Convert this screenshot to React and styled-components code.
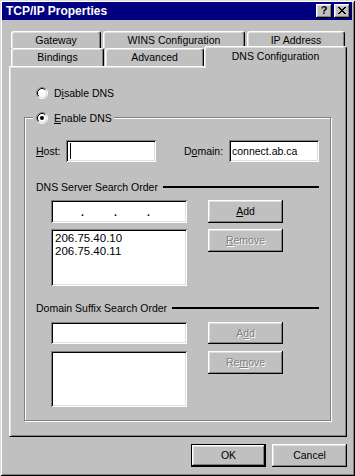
import React from "react";
import styled, { createGlobalStyle } from "styled-components";

const GlobalStyle = createGlobalStyle`
  html, body { margin: 0; padding: 0; background: #c0c0c0; }
  body { font-family: "Liberation Sans", Arial, sans-serif; font-size: 10.5px; color: #000; }
  * { box-sizing: border-box; }
`;

const Window = styled.div`
  width: 355px;
  height: 476px;
  background: #c0c0c0;
  box-shadow: inset 1px 1px #dfdfdf, inset -1px -1px #000, inset 2px 2px #fff, inset -2px -2px #808080;
  padding: 2px 3px 3px 2px;
  display: flex;
  flex-direction: column;
`;

const TitleBar = styled.div`
  height: 18px;
  background: #000080;
  color: #fff;
  display: flex;
  align-items: center;
  padding: 0 2px 0 4px;
`;

const TitleText = styled.div`
  flex: 1;
  font-weight: bold;
  font-size: 12px;
  white-space: nowrap;
`;

const CaptionButton = styled.div`
  width: 16px;
  height: 14px;
  margin-left: ${(p) => p.$ml || 0}px;
  background: #c0c0c0;
  box-shadow: inset -1px -1px #000, inset 1px 1px #fff, inset -2px -2px #808080, inset 2px 2px #dfdfdf;
  display: flex;
  align-items: center;
  justify-content: center;
  color: #000;
  font-weight: bold;
  font-size: 11px;
  line-height: 1;
  padding-bottom: 1px;
`;

const TabStrip = styled.div`
  margin-top: 11px;
  margin-left: 9px;
  display: flex;
  flex-direction: column;
`;

const TabRow = styled.div`
  display: flex;
  align-items: flex-start;
  height: ${(p) => p.$h}px;
`;

const Tab = styled.div`
  position: relative;
  z-index: ${(p) => (p.$active ? 2 : 0)};
  width: ${(p) => p.$w}px;
  height: ${(p) => (p.$active ? 22 : p.$h)}px;
  margin-left: ${(p) => p.$ml || 0}px;
  margin-top: ${(p) => (p.$active ? -2 : 0)}px;
  background: #c0c0c0;
  border-left: 1px solid #fff;
  border-top: 1px solid #fff;
  border-right: 1px solid #000;
  border-radius: 3px 3px 0 0;
  box-shadow: inset -1px 0 #808080, inset 1px 1px #dfdfdf;
  display: flex;
  align-items: center;
  justify-content: center;
  padding-bottom: ${(p) => (p.$active ? 4 : 1)}px;
  white-space: nowrap;
`;

const Panel = styled.div`
  width: 338px;
  height: 371px;
  margin-left: 7px;
  border-top: 1px solid #fff;
  border-left: 1px solid #fff;
  border-right: 1px solid #000;
  border-bottom: 1px solid #000;
  box-shadow: inset 1px 1px #dfdfdf, inset -1px -1px #808080;
  padding: 19px 15px 0 14px;
  display: flex;
  flex-direction: column;
`;

const RadioLabel = styled.div`
  display: flex;
  align-items: center;
  gap: 6px;
  height: 13px;
  margin-left: ${(p) => p.$ml || 0}px;
  white-space: nowrap;
`;

const GroupBox = styled.div`
  position: relative;
  margin-top: 18px;
  border: 1px solid #808080;
  box-shadow: inset 1px 1px #fff, 1px 1px #fff;
  padding: 22px 11px 13px 11px;
  display: flex;
  flex-direction: column;
`;

const Legend = styled.div`
  position: absolute;
  top: -7px;
  left: 8px;
  padding: 0 2px 0 3px;
  background: #c0c0c0;
`;

const FieldRow = styled.div`
  display: flex;
  align-items: center;
  height: 22px;
`;

const FieldLabel = styled.div`
  width: ${(p) => p.$w}px;
  margin-left: ${(p) => p.$ml || 0}px;
  white-space: nowrap;
`;

const TextBox = styled.div`
  width: ${(p) => p.$w}px;
  height: ${(p) => p.$h}px;
  background: #fff;
  box-shadow: inset 1px 1px #808080, inset -1px -1px #fff, inset 2px 2px #000, inset -2px -2px #dfdfdf;
  padding: 0 3px;
  display: flex;
  align-items: center;
  white-space: nowrap;
`;

const Caret = styled.span`
  display: block;
  width: 1px;
  height: 16px;
  background: #000;
  margin-left: 1px;
`;

const IpBox = styled(TextBox)`
  padding: 0;
`;

const IpSegment = styled.div`
  width: 33px;
  text-align: right;
  font-weight: bold;
  padding-right: 0;
  line-height: 1;
  padding-top: 2px;
`;

const SectionHeader = styled.div`
  display: flex;
  align-items: center;
  gap: 5px;
  height: 13px;
  margin-top: ${(p) => p.$mt}px;
  white-space: nowrap;
`;

const Rule = styled.div`
  flex: 1;
  height: 2px;
  background: #000;
`;

const SectionRow = styled.div`
  display: flex;
  align-items: flex-start;
  gap: 21px;
  margin-left: 15px;
  margin-top: ${(p) => p.$mt}px;
`;

const ListBox = styled.div`
  width: 136px;
  height: ${(p) => p.$h}px;
  background: #fff;
  box-shadow: inset 1px 1px #808080, inset -1px -1px #fff, inset 2px 2px #000, inset -2px -2px #dfdfdf;
  padding: 3px 4px;
  display: flex;
  flex-direction: column;
`;

const ListItem = styled.div`
  font-size: 11.5px;
  line-height: 12.5px;
  white-space: nowrap;
`;

const Button = styled.div`
  width: 75px;
  height: ${(p) => p.$h || 23}px;
  background: #c0c0c0;
  border: ${(p) => (p.$default ? "1px solid #000" : "none")};
  box-shadow: inset -1px -1px #000, inset 1px 1px #fff, inset -2px -2px #808080, inset 2px 2px #dfdfdf;
  display: flex;
  align-items: center;
  justify-content: center;
  color: ${(p) => (p.$disabled ? "#808080" : "#000")};
  text-shadow: ${(p) => (p.$disabled ? "1px 1px 0 #fff" : "none")};
  padding-bottom: 1px;
  white-space: nowrap;
`;

const DialogButtons = styled.div`
  display: flex;
  justify-content: flex-end;
  gap: 6px;
  margin-top: 7px;
  padding-right: 5px;
`;

const Key = styled.span`
  text-decoration: underline;
  text-underline-offset: 1px;
`;

function RadioIcon({ checked }) {
  return (
    <svg width="12" height="12" viewBox="0 0 12 12" style={{ flex: "none" }}>
      <circle cx="6" cy="6" r="4.5" fill="#fff" />
      <path d="M2.11 9.89 A5.5 5.5 0 0 1 9.89 2.11" fill="none" stroke="#808080" strokeWidth="1" />
      <path d="M9.89 2.11 A5.5 5.5 0 0 1 2.11 9.89" fill="none" stroke="#fff" strokeWidth="1" />
      <path d="M2.82 9.18 A4.5 4.5 0 0 1 9.18 2.82" fill="none" stroke="#000" strokeWidth="1" />
      <path d="M9.18 2.82 A4.5 4.5 0 0 1 2.82 9.18" fill="none" stroke="#dfdfdf" strokeWidth="1" />
      {checked && <circle cx="6" cy="6" r="2" fill="#000" />}
    </svg>
  );
}

function CloseGlyph() {
  return (
    <svg width="8" height="7" viewBox="0 0 8 7" shapeRendering="crispEdges">
      <path d="M0 0h2v1h-2zM6 0h2v1h-2zM1 1h2v1h-2zM5 1h2v1h-2zM2 2h4v1h-4zM3 3h2v1h-2zM2 4h4v1h-4zM1 5h2v1h-2zM5 5h2v1h-2zM0 6h2v1h-2zM6 6h2v1h-2z" fill="#000" />
    </svg>
  );
}

export default function App() {
  return (
    <>
      <GlobalStyle />
      <Window>
        <TitleBar>
          <TitleText>TCP/IP Properties</TitleText>
          <CaptionButton>?</CaptionButton>
          <CaptionButton $ml={2}>
            <CloseGlyph />
          </CaptionButton>
        </TitleBar>

        <TabStrip>
          <TabRow $h={17}>
            <Tab $w={90} $h={17}>Gateway</Tab>
            <Tab $w={142} $h={17} $ml={2}>WINS Configuration</Tab>
            <Tab $w={98} $h={17} $ml={2}>IP Address</Tab>
          </TabRow>
          <TabRow $h={18}>
            <Tab $w={93} $h={18}>Bindings</Tab>
            <Tab $w={99} $h={18} $ml={1}>Advanced</Tab>
            <Tab $w={143} $h={18} $active>DNS Configuration</Tab>
          </TabRow>
        </TabStrip>

        <Panel>
          <RadioLabel $ml={12}>
            <RadioIcon />
            <span>
              D<Key>i</Key>sable DNS
            </span>
          </RadioLabel>

          <GroupBox>
            <Legend>
              <RadioLabel>
                <RadioIcon checked />
                <span>
                  <Key>E</Key>nable DNS
                </span>
              </RadioLabel>
            </Legend>

            <FieldRow>
              <FieldLabel $w={30}>
                <Key>H</Key>ost:
              </FieldLabel>
              <TextBox $w={90} $h={22}>
                <Caret />
              </TextBox>
              <FieldLabel $w={45} $ml={28}>
                D<Key>o</Key>main:
              </FieldLabel>
              <TextBox $w={90} $h={22}>connect.ab.ca</TextBox>
            </FieldRow>

            <SectionHeader $mt={18}>
              <span>DNS Server Search Order</span>
              <Rule />
            </SectionHeader>
            <SectionRow $mt={7}>
              <IpBox $w={136} $h={23}>
                <IpSegment>.</IpSegment>
                <IpSegment>.</IpSegment>
                <IpSegment>.</IpSegment>
              </IpBox>
              <Button>
                <span>
                  <Key>A</Key>dd
                </span>
              </Button>
            </SectionRow>
            <SectionRow $mt={6}>
              <ListBox $h={57}>
                <ListItem>206.75.40.10</ListItem>
                <ListItem>206.75.40.11</ListItem>
              </ListBox>
              <Button $disabled>
                <span>
                  <Key>R</Key>emove
                </span>
              </Button>
            </SectionRow>

            <SectionHeader $mt={15}>
              <span>Domain Suffix Search Order</span>
              <Rule />
            </SectionHeader>
            <SectionRow $mt={8}>
              <TextBox $w={136} $h={22} />
              <Button $disabled $h={22}>
                <span>
                  A<Key>d</Key>d
                </span>
              </Button>
            </SectionRow>
            <SectionRow $mt={7}>
              <ListBox $h={56} />
              <Button $disabled>
                <span>
                  Re<Key>m</Key>ove
                </span>
              </Button>
            </SectionRow>
          </GroupBox>
        </Panel>

        <DialogButtons>
          <Button $default>OK</Button>
          <Button>Cancel</Button>
        </DialogButtons>
      </Window>
    </>
  );
}
